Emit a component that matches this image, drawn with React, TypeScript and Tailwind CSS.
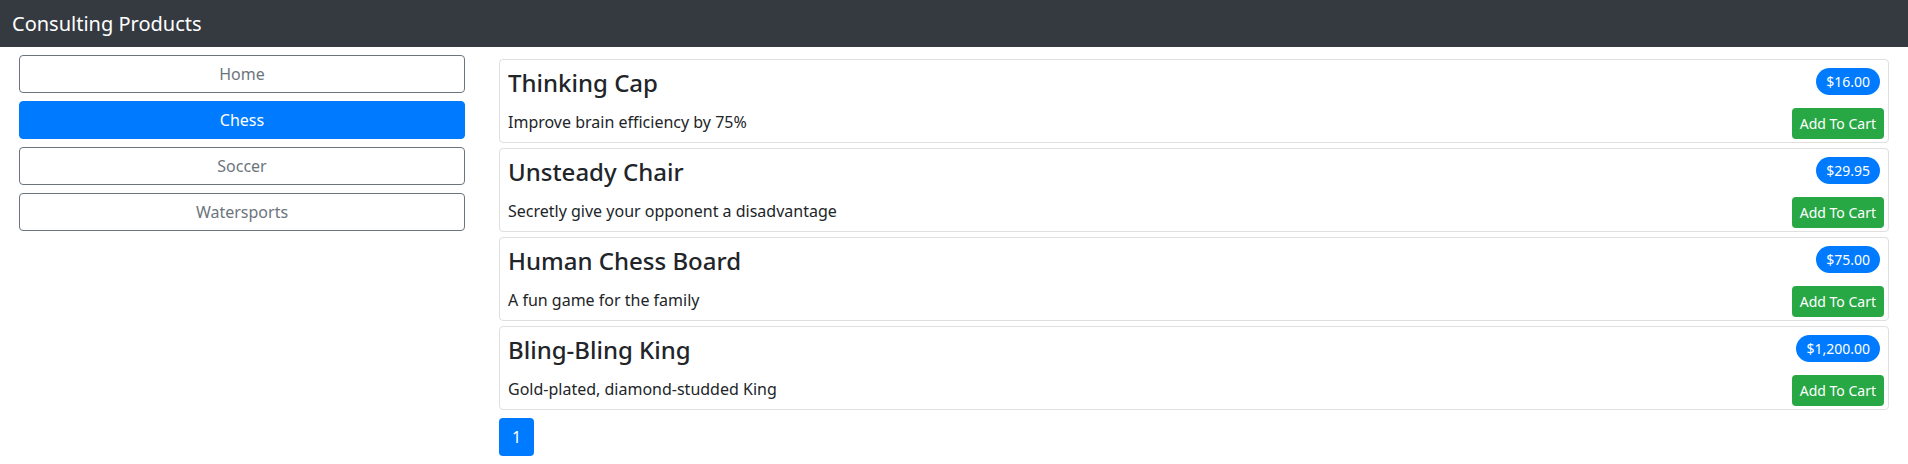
import { useState } from "react";

type Product = { name: string; description: string; price: number };

const products: Product[] = [
  { name: "Thinking Cap", description: "Improve brain efficiency by 75%", price: 16 },
  { name: "Unsteady Chair", description: "Secretly give your opponent a disadvantage", price: 29.95 },
  { name: "Human Chess Board", description: "A fun game for the family", price: 75 },
  { name: "Bling-Bling King", description: "Gold-plated, diamond-studded King", price: 1200 },
];

const categories = ["Home", "Chess", "Soccer", "Watersports"];

const money = (n: number) =>
  "$" + n.toLocaleString("en-US", { minimumFractionDigits: 2, maximumFractionDigits: 2 });

export default function App() {
  const [selected, setSelected] = useState("Chess");

  return (
    <div className="min-h-screen bg-white text-[#212529] font-['Noto_Sans',sans-serif]">
      <div className="flex h-[47px] items-center bg-[#343a40] px-3 text-[20px] text-white">
        Consulting Products
      </div>
      <div className="flex">
        <div className="flex w-[477px] flex-col gap-2 pl-[19px] pr-[12px] pt-2">
          {categories.map((c) =>
            c === selected ? (
              <button
                key={c}
                onClick={() => setSelected(c)}
                className="h-[38px] rounded border border-[#007bff] bg-[#007bff] text-base text-white"
              >
                {c}
              </button>
            ) : (
              <button
                key={c}
                onClick={() => setSelected(c)}
                className="h-[38px] rounded border border-[#6c757d] bg-white text-base text-[#6c757d]"
              >
                {c}
              </button>
            )
          )}
        </div>
        <div className="flex flex-1 flex-col gap-[5px] pl-[22px] pr-[19px] pt-3">
          {products.map((p) => (
            <div
              key={p.name}
              className="flex h-[84px] justify-between rounded border border-[#dfdfdf] pb-[3px] pl-2 pr-1 pt-2"
            >
              <div className="flex flex-col justify-between pt-[1px]">
                <h4 className="text-[24px] font-medium leading-[1.2]">{p.name}</h4>
                <p className="mb-[5px] text-base">{p.description}</p>
              </div>
              <div className="flex flex-col items-end justify-between">
                <span className="mr-1 rounded-full bg-[#007bff] px-[10px] py-[4px] text-[14px] leading-[19px] text-white">
                  {money(p.price)}
                </span>
                <button className="h-[31px] rounded bg-[#28a745] px-2 text-[14px] text-white">
                  Add To Cart
                </button>
              </div>
            </div>
          ))}
          <div className="mt-[3px] flex">
            <button className="h-[38px] w-[35px] rounded bg-[#007bff] text-base text-white">1</button>
          </div>
        </div>
      </div>
    </div>
  );
}
